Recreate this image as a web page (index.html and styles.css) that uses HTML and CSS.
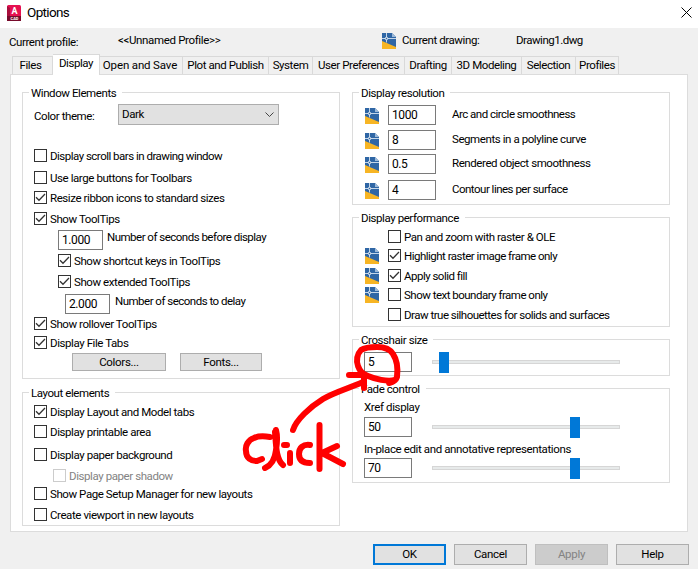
FILE: index.html
```html
<!DOCTYPE html>
<html lang="en">
<head>
    <meta charset="UTF-8">
    <title>Options</title>
    <link rel="stylesheet" href="styles.css">
</head>
<body>
<svg class="defs">
    <symbol id="dwg" viewBox="0 0 14 16">
        <path fill="#2f66a5" d="M0 0h10l4 4v12H0z"/>
        <path fill="#9db9d8" d="M10 0l4 4h-4z"/>
        <path fill="#f7b524" d="M0 8l14 6v2H0z"/>
        <path fill="none" stroke="#c5d6e8" d="M4.5 0v4M4.5 7v2.5M0 5.5h3M6 5.5h8"/>
        <circle cx="4.5" cy="5.5" r="1.2" fill="none" stroke="#fff"/>
    </symbol>
    <symbol id="tick" viewBox="0 0 11 11">
        <path fill="none" stroke="#333" stroke-width="1.3" d="M1 5.2l3 3L10 2"/>
    </symbol>
</svg>
<div class="dialog">
    <header class="titlebar">
        <svg class="app-icon" viewBox="0 0 14 16">
            <rect width="14" height="16" rx="1.5" fill="#e51050"/>
            <path fill="#a80f3c" d="M0 1l3 2v8H0z"/>
            <path fill="#770a2b" d="M0 11h14v5H0z"/>
            <text x="7.5" y="8.5" class="app-letter">A</text>
            <text x="7.5" y="14.8" class="app-cad">CAD</text>
        </svg>
        <h1>Options</h1>
        <svg class="close" viewBox="0 0 11 11"><path fill="none" stroke="#000" d="M.5.5l10 10M10.5.5l-10 10"/></svg>
    </header>
    <div class="profile">
        <span class="profile-label">Current profile:</span>
        <span class="profile-name">&lt;&lt;Unnamed Profile&gt;&gt;</span>
        <svg class="dwg"><use href="#dwg"/></svg>
        <span class="drawing-label">Current drawing:</span>
        <span class="drawing-name">Drawing1.dwg</span>
    </div>
    <nav class="tabs">
        <a class="tab files">Files</a>
        <a class="tab active">Display</a>
        <a class="tab open">Open and Save</a>
        <a class="tab">Plot and Publish</a>
        <a class="tab">System</a>
        <a class="tab">User Preferences</a>
        <a class="tab">Drafting</a>
        <a class="tab">3D Modeling</a>
        <a class="tab">Selection</a>
        <a class="tab">Profiles</a>
    </nav>
    <main class="panel">
        <div class="column">
            <fieldset class="window-elements">
                <legend>Window Elements</legend>
                <div class="rows">
                    <div class="row theme">
                        <span class="theme-label">Color theme:</span>
                        <div class="select">Dark<svg viewBox="0 0 9 5"><path fill="none" stroke="#444" d="M.5.5l4 4 4-4"/></svg></div>
                    </div>
                    <label class="row"><i class="box"></i><span class="tight">Display scroll bars in drawing window</span></label>
                    <label class="row"><i class="box"></i><span>Use large buttons for Toolbars</span></label>
                    <label class="row"><i class="box"><svg><use href="#tick"/></svg></i><span>Resize ribbon icons to standard sizes</span></label>
                    <label class="row"><i class="box"><svg><use href="#tick"/></svg></i><span>Show ToolTips</span></label>
                    <label class="row indent"><b class="field short">1.000</b><span class="field-text tight">Number of seconds before display</span></label>
                    <label class="row indent"><i class="box"><svg><use href="#tick"/></svg></i><span>Show shortcut keys in ToolTips</span></label>
                    <label class="row indent"><i class="box"><svg><use href="#tick"/></svg></i><span>Show extended ToolTips</span></label>
                    <label class="row indent-more"><b class="field short">2.000</b><span class="field-text tight">Number of seconds to delay</span></label>
                    <label class="row"><i class="box"><svg><use href="#tick"/></svg></i><span>Show rollover ToolTips</span></label>
                    <label class="row"><i class="box"><svg><use href="#tick"/></svg></i><span>Display File Tabs</span></label>
                    <div class="row group-buttons">
                        <button class="button colors">Colors...</button>
                        <button class="button fonts">Fonts...</button>
                    </div>
                </div>
            </fieldset>
            <fieldset class="layout-elements">
                <legend>Layout elements</legend>
                <div class="rows">
                    <label class="row"><i class="box"><svg><use href="#tick"/></svg></i><span>Display Layout and Model tabs</span></label>
                    <label class="row"><i class="box"></i><span>Display printable area</span></label>
                    <label class="row"><i class="box"></i><span>Display paper background</span></label>
                    <label class="row disabled"><i class="box"></i><span>Display paper shadow</span></label>
                    <label class="row"><i class="box"></i><span>Show Page Setup Manager for new layouts</span></label>
                    <label class="row"><i class="box"></i><span>Create viewport in new layouts</span></label>
                </div>
            </fieldset>
        </div>
        <div class="column">
            <fieldset class="resolution">
                <legend>Display resolution</legend>
                <div class="rows">
                    <label class="row"><svg class="dwg"><use href="#dwg"/></svg><b class="field">1000</b><span class="tight">Arc and circle smoothness</span></label>
                    <label class="row"><svg class="dwg"><use href="#dwg"/></svg><b class="field">8</b><span>Segments in a polyline curve</span></label>
                    <label class="row"><svg class="dwg"><use href="#dwg"/></svg><b class="field">0.5</b><span>Rendered object smoothness</span></label>
                    <label class="row"><svg class="dwg"><use href="#dwg"/></svg><b class="field">4</b><span class="tight">Contour lines per surface</span></label>
                </div>
            </fieldset>
            <fieldset class="performance">
                <legend>Display performance</legend>
                <div class="rows">
                    <label class="row"><i class="box"></i><span>Pan and zoom with raster &amp; OLE</span></label>
                    <label class="row"><svg class="dwg"><use href="#dwg"/></svg><i class="box"><svg><use href="#tick"/></svg></i><span class="tight">Highlight raster image frame only</span></label>
                    <label class="row"><svg class="dwg"><use href="#dwg"/></svg><i class="box"><svg><use href="#tick"/></svg></i><span class="tight">Apply solid fill</span></label>
                    <label class="row"><svg class="dwg"><use href="#dwg"/></svg><i class="box"></i><span class="tight">Show text boundary frame only</span></label>
                    <label class="row"><i class="box"></i><span class="tight">Draw true silhouettes for solids and surfaces</span></label>
                </div>
            </fieldset>
            <fieldset class="crosshair">
                <legend>Crosshair size</legend>
                <div class="rows">
                    <div class="row"><b class="field">5</b><div class="slider low"><i class="thumb"></i></div></div>
                </div>
            </fieldset>
            <fieldset class="fade">
                <legend>Fade control</legend>
                <div class="rows">
                    <span class="caption">Xref display</span>
                    <div class="row"><b class="field">50</b><div class="slider"><i class="thumb"></i></div></div>
                    <span class="caption">In-place edit and annotative representations</span>
                    <div class="row"><b class="field">70</b><div class="slider"><i class="thumb"></i></div></div>
                </div>
            </fieldset>
        </div>
    </main>
    <footer class="actions">
        <button class="button default">OK</button>
        <button class="button">Cancel</button>
        <button class="button off">Apply</button>
        <button class="button">Help</button>
    </footer>
</div>
<!-- hand-drawn "click" note pointing at the crosshair field -->
<svg class="note" viewBox="0 0 698 569">
    <path d="M389 383c4-1 7-3 8-6c1-8 0-17-4-23c-3-5-10-7-16-7c-7 0-13 1-16 3c-4 4-5 11-3 16c2 6 5 8 10 10c7 3 19 6 27 4"/>
    <path d="M293 430c3-10 17-23 30-31c12-7 24-10 40-17M349 375l15 0v13"/>
    <path d="M270 437c-6-1-12-1-16 1c-6 2-9 8-8 13c0 7 5 10 11 10l5-2M276 430c2 7 1 14 0 20c-1 9-4 15-11 18M275 432c1 13 1 27 8 33" />
    <path d="M284 445h3M290 453v10M310 445c-7-1-11 3-11 9c0 7 5 9 11 9M319.5 425v44M337 446l-15 7l21 11"/>
</svg>
</body>
</html>
```
FILE: styles.css
```css
* {
    box-sizing: border-box;
}

body {
    margin: 0;
    overflow: hidden;
    font-family: Roboto, "Liberation Sans", sans-serif;
    font-size: 11.5px;
    line-height: 15px;
    letter-spacing: -.42px;
    color: #000;
}

.defs {
    display: none;
}

.dialog {
    width: 698px;
    height: 569px;
    background: #f0f0f0;
}

.titlebar {
    display: flex;
    align-items: center;
    height: 28px;
    padding: 0 6px 3px 7px;
    background: #fff;
}

.app-icon {
    width: 14px;
    height: 16px;
}

.app-letter,
.app-cad {
    fill: #fff;
    font-weight: bold;
    font-size: 9px;
    letter-spacing: 0;
    text-anchor: middle;
}

.app-cad {
    font-size: 4px;
}

h1 {
    margin: 0 auto 0 6px;
    font-size: 13.5px;
    font-weight: normal;
    letter-spacing: -.65px;
}

.close {
    width: 11px;
    height: 11px;
}

.profile {
    display: flex;
    height: 26px;
    padding: 5px 0 0 9px;
}

.profile-label {
    width: 109px;
    padding-top: 2px;
}

.profile-name {
    width: 264px;
    letter-spacing: -.35px;
}

.drawing-label {
    width: 114px;
    margin-left: 6px;
}

.drawing-name {
    letter-spacing: -.5px;
}

.dwg {
    flex: none;
    width: 14px;
    height: 16px;
}

.profile .dwg {
    margin-top: 0;
}

.tabs {
    display: grid;
    grid-template-columns: 41px 47px 83px 86px 44px 92px 47px 70px 54px 43px;
    align-items: end;
    height: 20px;
    padding-left: 12px;
}

.tab {
    height: 18px;
    border: solid #d9d9d9;
    border-width: 1px 1px 0 0;
    line-height: 17px;
    text-align: center;
    white-space: nowrap;
}

.files {
    padding-right: 4px;
    border-left-width: 1px;
}

.open {
    padding-right: 2px;
    letter-spacing: -.15px;
}

.active {
    position: relative;
    height: 21px;
    margin-bottom: -1px;
    background: #fff;
}

.panel {
    display: flex;
    gap: 12px;
    width: 678px;
    height: 458px;
    margin-left: 10px;
    padding: 10px 0 0 11px;
    border: 1px solid #dcdcdc;
    background: #fff;
}

.column {
    width: 318px;
}

fieldset {
    margin: 0 0 5px;
    padding: 0;
    border: 1px solid #dcdcdc;
}

legend {
    height: 15px;
    margin-left: 6px;
    padding: 1px 6px 0 2px;
}

.rows {
    display: grid;
    align-items: start;
    padding: 5px 0 0 11px;
}

.row {
    display: flex;
    white-space: nowrap;
}

.window-elements {
    height: 294px;
    margin-bottom: 6px;
}

.window-elements .rows {
    grid-template-rows: 45px 22px 20px 21px 18px 24px 21px 19px 23px 19px 17px 18px;
    padding-top: 4px;
}

.layout-elements {
    height: 141px;
}

.layout-elements .rows {
    grid-template-rows: 20px 23px 21px 18px 21px 13px;
}

.resolution {
    height: 120px;
}

.resolution .rows {
    grid-template-rows: 25px 24px 26px 20px;
    padding-left: 12px;
}

.resolution .dwg {
    margin: 3px 9px 0 0;
}

.resolution span {
    margin: 2px 0 0 16px;
}

.performance {
    height: 117px;
}

.performance .rows {
    grid-template-rows: 19px 20px 19px 20px 13px;
    justify-items: start;
    padding-left: 12px;
}

.performance .row {
    height: 13px;
    padding-left: 23px;
}

.performance .dwg {
    margin: -1px 9px 0 -23px;
}

.crosshair {
    height: 44px;
}

.fade {
    height: 102px;
}

.fade .rows {
    grid-template-rows: 17px 25px 16px 20px;
    padding-top: 4px;
}

.caption {
    letter-spacing: -.38px;
    white-space: nowrap;
}

.tight {
    letter-spacing: -.51px;
}

.box {
    flex: none;
    width: 13px;
    height: 13px;
    margin-right: 3px;
    border: 1px solid #333;
    background: #fff;
}

.box svg {
    display: block;
    width: 11px;
    height: 11px;
}

.field {
    flex: none;
    width: 48px;
    height: 20px;
    padding: 2px 0 0 3px;
    border: 1px solid #7a7a7a;
    background: #fff;
    font-weight: normal;
    font-size: 12px;
}

.short {
    width: 45px;
    margin-right: 4px;
}

.indent {
    margin-left: 24px;
}

.indent-more {
    margin-left: 31px;
}

.indent-more .field {
    margin-right: 5px;
}

.theme-label {
    width: 84px;
    padding-top: 5px;
}

.select {
    display: flex;
    align-items: center;
    justify-content: space-between;
    width: 161px;
    height: 21px;
    padding: 0 4px 0 3px;
    border: 1px solid #adadad;
    background: #e1e1e1;
}

.select svg {
    width: 9px;
    height: 5px;
}

.disabled {
    margin-left: 19px;
    color: #838383;
}

.disabled .box {
    border-color: #ccc;
}

.button {
    width: 73px;
    height: 21px;
    padding: 0;
    border: 1px solid #adadad;
    background: #e1e1e1;
    color: #000;
    font: inherit;
    letter-spacing: -.3px;
}

.group-buttons {
    gap: 14px;
    padding-left: 38px;
}

.group-buttons .button {
    height: 18px;
}

.colors {
    width: 94px;
}

.fonts {
    width: 82px;
}

.slider {
    display: flex;
    align-items: center;
    width: 188px;
    height: 4px;
    margin: 8px 0 0 20px;
    padding-left: 137px;
    border: 1px solid #d6d6d6;
    background: #e7eaea;
}

.low {
    padding-left: 6px;
}

.thumb {
    flex: none;
    width: 10px;
    height: 21px;
    background: #0078d7;
}

.actions {
    display: flex;
    justify-content: flex-end;
    gap: 8px;
    padding: 12px 9px 0 0;
}

.default {
    border: 2px solid #0078d7;
}

.off {
    border-color: #bfbfbf;
    background: #ccc;
    color: #838383;
}

.note {
    position: absolute;
    left: 0;
    top: 0;
    width: 698px;
    height: 569px;
    fill: none;
    stroke: #f00;
    stroke-width: 6px;
    stroke-linecap: round;
    stroke-linejoin: round;
}
```
